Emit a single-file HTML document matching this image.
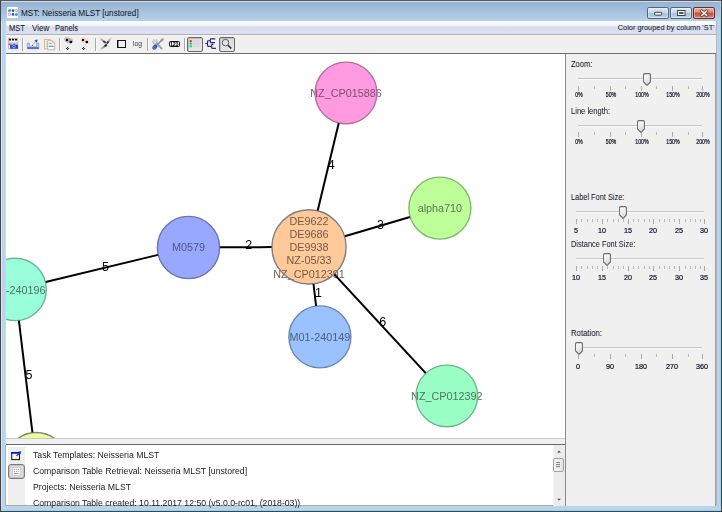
<!DOCTYPE html>
<html><head><meta charset="utf-8">
<style>
*{margin:0;padding:0;box-sizing:border-box}
html,body{width:722px;height:512px;overflow:hidden;background:#c2d7ec;font-family:"Liberation Sans",sans-serif}
.a{position:absolute}
.t{position:absolute;white-space:nowrap;transform-origin:0 0;line-height:1}
#outer{left:0;top:0;width:722px;height:512px;border:1px solid #444;border-top-color:#585858}
#title{left:1px;top:1px;width:720px;height:20px;background:linear-gradient(#cddcec 0,#cddcec 1px,#97b3d3 1px,#b6d0e8 20px)}
#framer{left:716px;top:21px;width:5px;height:490px;background:linear-gradient(90deg,#a8b8cc 0,#a8b8cc 1px,#bcd2ea 1px,#bcd2ea 4px,#8cd8f4 4px)}
#framel{left:1px;top:21px;width:5px;height:490px;background:linear-gradient(90deg,#d8e8f8 0,#d8e8f8 1px,#b9d1e9 1px,#c2d8ee 5px)}
#frameb{left:1px;top:506px;width:720px;height:5px;background:linear-gradient(#a8b8cc 0,#a8b8cc 0px,#bcd2ea 0px,#bcd2ea 4px,#8cd8f4 4px)}
#menubar{left:6px;top:21px;width:710px;height:14px;background:linear-gradient(#fdfdff 0,#f4f5fb 4px,#e9ebf6 5px,#d7dcee 6px,#dce1f2 13px,#b0b0b8 13px)}
#toolbar{left:6px;top:35px;width:710px;height:19px;background:linear-gradient(#fbfbfb 0,#f0f0f0 1px,#f0f0f0 18px,#6e6e6e 18px)}
#canvas{left:6px;top:54px;width:559px;height:384px;background:#fff;overflow:hidden}
#vline{left:565px;top:54px;width:1px;height:452px;background:#8a8a8a}
#rpanel{left:566px;top:54px;width:150px;height:452px;background:#f0f0f0;border-right:1px solid #a0a0a0}
#hsplit{left:6px;top:438px;width:559px;height:7px;background:linear-gradient(#c8c8c8 0,#c8c8c8 1px,#f0f0f0 1px,#f0f0f0 6px,#6a6a6a 6px)}
#log{left:6px;top:445px;width:559px;height:61px;background:#fff;overflow:hidden;border-bottom:1px solid #a4acb8}
.btn{position:absolute;top:7px;width:22px;height:12px;border:1px solid #56657c;border-radius:2px;background:linear-gradient(#dce8f4 0,#c8d8ec 45%,#a8c0dc 50%,#b4cce6 85%,#c8dcf0 100%);box-shadow:inset 0 0 0 1px rgba(255,255,255,0.35)}
</style></head><body>
<div id="outer" class="a"></div>
<div id="title" class="a"></div>
<div id="framel" class="a"></div>
<div id="framer" class="a"></div>
<div id="frameb" class="a"></div>
<div class="a" style="left:720px;top:2px;width:1px;height:19px;background:linear-gradient(#b0d4ee,#98d4f0)"></div>
<div id="menubar" class="a"></div>
<div id="toolbar" class="a"></div>
<div id="canvas" class="a"><svg class="a" style="left:0;top:0;will-change:transform" width="559" height="384" viewBox="6 54 559 384">
<circle cx="346" cy="93" r="30.9" fill="#ff99e0"/>
<circle cx="439.9" cy="208.1" r="31.0" fill="#bfff99"/>
<circle cx="309" cy="246.9" r="37.1" fill="#ffc999"/>
<circle cx="188.5" cy="247.5" r="31.099999999999998" fill="#99a8ff"/>
<circle cx="15.1" cy="289.4" r="31.2" fill="#99ffdb"/>
<circle cx="319.9" cy="336.9" r="31.0" fill="#99c2ff"/>
<circle cx="446.8" cy="395.9" r="30.8" fill="#99ffc4"/>
<circle cx="36.2" cy="463.5" r="31.0" fill="#e8ff99"/>
<g font-family="Liberation Sans" font-size="10.8" text-anchor="middle">
<text x="346" y="97" fill="#74546e">NZ_CP015886</text>
<text x="439.9" y="212.2" fill="#5c7454">alpha710</text>
<text x="309" y="224.6" fill="#725c46">DE9622</text>
<text x="309" y="238.0" fill="#725c46">DE9686</text>
<text x="309" y="250.9" fill="#725c46">DE9938</text>
<text x="309" y="264.0" fill="#725c46">NZ-05/33</text>
<text x="309" y="277.6" fill="#725c46">NZ_CP012391</text>
<text x="188.5" y="251.2" fill="#505684">M0579</text>
<text x="15.1" y="293.7" fill="#4e7464">M01-240196</text>
<text x="319.9" y="341" fill="#4e5e7c">M01-240149</text>
<text x="446.8" y="400" fill="#4e745c">NZ_CP012392</text>
</g>
<circle cx="346" cy="93" r="30.9" fill="none" stroke="#b46ea0" stroke-width="1.4"/>
<circle cx="439.9" cy="208.1" r="31.0" fill="none" stroke="#7fb86c" stroke-width="1.4"/>
<circle cx="309" cy="246.9" r="37.1" fill="none" stroke="#808080" stroke-width="1.4"/>
<circle cx="188.5" cy="247.5" r="31.099999999999998" fill="none" stroke="#6a76b4" stroke-width="1.4"/>
<circle cx="15.1" cy="289.4" r="31.2" fill="none" stroke="#6eb49a" stroke-width="1.4"/>
<circle cx="319.9" cy="336.9" r="31.0" fill="none" stroke="#6a88b4" stroke-width="1.4"/>
<circle cx="446.8" cy="395.9" r="30.8" fill="none" stroke="#6eb48a" stroke-width="1.4"/>
<circle cx="36.2" cy="463.5" r="31.0" fill="none" stroke="#808080" stroke-width="1.4"/>
<line x1="317.7" y1="210.5" x2="338.7" y2="123.3" stroke="#000" stroke-width="2"/>
<line x1="344.9" y1="236.3" x2="409.9" y2="217.0" stroke="#000" stroke-width="2"/>
<line x1="271.6" y1="247.1" x2="219.9" y2="247.3" stroke="#000" stroke-width="2"/>
<line x1="313.5" y1="284.0" x2="316.1" y2="305.8" stroke="#000" stroke-width="2"/>
<line x1="334.4" y1="274.4" x2="425.7" y2="373.1" stroke="#000" stroke-width="2"/>
<line x1="158.0" y1="254.9" x2="45.7" y2="282.0" stroke="#000" stroke-width="2"/>
<line x1="18.9" y1="320.7" x2="32.4" y2="432.4" stroke="#000" stroke-width="2"/>
<g font-family="Liberation Sans" font-size="12.5" fill="#000">
<text x="327.7" y="169">4</text>
<text x="377.09999999999997" y="229">3</text>
<text x="245.20000000000002" y="249.3">2</text>
<text x="314.9" y="296.9">1</text>
<text x="379.2" y="326.3">6</text>
<text x="102.10000000000001" y="270.8">5</text>
<text x="25.5" y="378.8">5</text>
</g></svg></div>
<div id="vline" class="a"></div>
<div id="rpanel" class="a"></div>
<div id="hsplit" class="a"></div>
<div id="log" class="a"></div>
<div class="btn" style="left:647px"></div>
<div class="btn" style="left:670px"></div>
<div class="btn" style="left:693px;border-color:#6a2a2a;background:linear-gradient(#e8b0a0 0,#dc9080 40%,#c85030 50%,#d06848 80%,#e09080 100%)"></div>
<svg class="a" style="left:647px;top:7px" width="68" height="12" viewBox="0 0 68 12">
<rect x="7.5" y="5.3" width="7.2" height="2.8" rx="0.6" fill="#fff" stroke="#3a4250" stroke-width="1"/>
<rect x="30.5" y="3.5" width="7.5" height="5" fill="#fff" stroke="#3a4250" stroke-width="1"/>
<rect x="32" y="5" width="4.5" height="2" fill="#4a5668"/>
<path d="M54.8 4 L59.6 8.4 M59.6 4 L54.8 8.4" stroke="#5a3a3a" stroke-width="3" stroke-linecap="square"/>
<path d="M54.8 4 L59.6 8.4 M59.6 4 L54.8 8.4" stroke="#f4f4f4" stroke-width="1.5" stroke-linecap="square"/>
</svg>
<svg class="a" style="left:7px;top:7px" width="11" height="11" viewBox="0 0 11 11"><rect width="11" height="11" fill="#fff"/><circle cx="2.5" cy="3.6" r="1.5" fill="#1ea4ec"/><circle cx="6" cy="3.6" r="1.3" fill="#1a5ab8"/><circle cx="9.4" cy="3.6" r="1.2" fill="none" stroke="#f27ac0" stroke-width="1"/><circle cx="2.5" cy="7.4" r="1.2" fill="none" stroke="#f27ac0" stroke-width="1"/><circle cx="6" cy="7.4" r="1.3" fill="#1a5ab8"/><circle cx="9.4" cy="7.4" r="1.5" fill="#1ea4ec"/></svg>
<div class="t" style="left:21px;top:9.86px;font-size:8.2px;color:#101020;">MST: Neisseria MLST [unstored]</div>
<div class="t" style="left:8.8px;top:23.69px;font-size:8.4px;color:#0a0a14;transform:scaleX(0.9);">MST</div>
<div class="t" style="left:31.5px;top:23.69px;font-size:8.4px;color:#0a0a14;transform:scaleX(0.96);">View</div>
<div class="t" style="left:54.5px;top:23.69px;font-size:8.4px;color:#0a0a14;transform:scaleX(0.9);">Panels</div>
<div class="t" style="left:617.7px;top:23.64px;font-size:7.4px;color:#0a0a14;">Color grouped by column 'ST'</div>
<svg class="a" style="left:8px;top:38px" width="11" height="12" viewBox="0 0 11 12">
<rect x="0.6" y="0.4" width="9" height="10.3" fill="#f8f8f8" stroke="#b4b4b4" stroke-width="0.9"/>
<rect x="1" y="0.8" width="2.1" height="1.8" rx="0.6" fill="#000"/><rect x="3.9" y="0.8" width="2.1" height="1.8" rx="0.6" fill="#000"/><rect x="6.9" y="0.8" width="2.1" height="1.8" rx="0.6" fill="#000"/>
<rect x="1" y="4.2" width="8.4" height="1.6" fill="#f0b8b8"/>
<circle cx="1.6" cy="6.3" r="0.9" fill="#f01818"/>
<rect x="2.1" y="6.6" width="7.9" height="4.2" rx="0.4" fill="#1a48d8"/><rect x="5.2" y="5.8" width="1.8" height="1" fill="#1a48d8"/>
<circle cx="6" cy="8.6" r="1.3" fill="none" stroke="#a8c0f0" stroke-width="0.8"/>
</svg>
<div class="a" style="left:22px;top:38px;width:1px;height:13px;background:#a8a8a8;box-shadow:1px 0 0 #fff"></div>
<svg class="a" style="left:26px;top:39px" width="14" height="11" viewBox="0 0 14 11">
<path d="M1.3 4 h2 v3.8 h7.4 v-3.8 h2 v5.7 h-11.4 z" fill="#9ab4dc" stroke="#7090c4" stroke-width="0.6"/>
<path d="M2.2 4.6 v3.6 M11.8 4.6 v3.6" stroke="#e4ecf8" stroke-width="0.6"/>
<rect x="1.2" y="8.3" width="11.6" height="1.5" fill="#4a6cb0"/>
<line x1="6.4" y1="6.2" x2="9.4" y2="2.8" stroke="#3a4aa8" stroke-width="0.8" stroke-dasharray="0.8 0.8"/>
<circle cx="6.4" cy="6.3" r="0.55" fill="#2030a0"/>
<path d="M8.8 1.6 L11.2 0.8 L10.6 3.2 Z" fill="#1a4aa8" stroke="#1a4aa8" stroke-width="0.6" stroke-linejoin="round"/>
</svg>
<svg class="a" style="left:44px;top:39px" width="12" height="12" viewBox="0 0 12 12">
<rect x="0.5" y="0.5" width="5.6" height="9.3" fill="#f2f4fa" stroke="#cdb880" stroke-width="0.9"/>
<line x1="1.8" y1="2.8" x2="3.5" y2="2.8" stroke="#9ab0d8" stroke-width="0.8"/><line x1="1.8" y1="5.2" x2="3.5" y2="5.2" stroke="#9ab0d8" stroke-width="0.8"/><line x1="1.8" y1="7.4" x2="3.5" y2="7.4" stroke="#9ab0d8" stroke-width="0.8"/>
<path d="M3.6 1.5 h4.8 l2.4 2.4 v6.8 h-7.2 z" fill="#f6f8fd" stroke="#cdb880" stroke-width="0.9"/>
<path d="M8.4 1.5 v2.4 h2.4" fill="#e8d8a8" stroke="#cdb880" stroke-width="0.6"/>
<line x1="4.8" y1="4.3" x2="7.6" y2="4.3" stroke="#7890c8" stroke-width="0.9"/><line x1="4.8" y1="7.3" x2="9.8" y2="7.3" stroke="#8098cc" stroke-width="1.4"/>
</svg>
<div class="a" style="left:59px;top:38px;width:1px;height:13px;background:#a8a8a8;box-shadow:1px 0 0 #fff"></div>
<svg class="a" style="left:63px;top:37px" width="12" height="14" viewBox="0 0 12 14">
<ellipse cx="5.8" cy="3.3" rx="4.7" ry="2.6" transform="rotate(22 5.8 3.3)" fill="#a8a8a8" opacity="0.8"/>
<circle cx="4" cy="3" r="1.2" fill="#000"/><circle cx="7.8" cy="5" r="1.3" fill="#000"/>
<line x1="6.8" y1="7" x2="5" y2="10" stroke="#c4c4c4" stroke-width="0.6"/>
<path d="M4 10h1v1h-1zM3 11h1v1h-1zM5 11h1v1h-1zM4 12h1v1h-1z" fill="#2a2a2a"/><rect x="4" y="11" width="1" height="1" fill="#b0b0b0"/>
</svg>
<svg class="a" style="left:79px;top:37px" width="12" height="14" viewBox="0 0 12 14">
<ellipse cx="6" cy="3.6" rx="4.6" ry="2.9" transform="rotate(22 6 3.6)" fill="#ffd6d6" opacity="0.9"/>
<circle cx="4" cy="3" r="1.2" fill="#000"/><circle cx="7.8" cy="5" r="1.3" fill="#000"/>
<line x1="6.8" y1="7" x2="5" y2="10" stroke="#c4c4c4" stroke-width="0.6"/>
<path d="M4 10h1v1h-1zM3 11h1v1h-1zM5 11h1v1h-1zM4 12h1v1h-1z" fill="#2a2a2a"/><rect x="4" y="11" width="1" height="1" fill="#b0b0b0"/>
</svg>
<div class="a" style="left:95px;top:38px;width:1px;height:13px;background:#a8a8a8;box-shadow:1px 0 0 #fff"></div>
<svg class="a" style="left:99px;top:37px" width="13" height="14" viewBox="0 0 13 14">
<defs>
<linearGradient id="s1" gradientUnits="userSpaceOnUse" x1="1" y1="1.5" x2="6.5" y2="5.5"><stop offset="0" stop-color="#e0e0e0"/><stop offset="1" stop-color="#505050"/></linearGradient>
<linearGradient id="s2" gradientUnits="userSpaceOnUse" x1="12" y1="1.2" x2="8" y2="6.2"><stop offset="0" stop-color="#e0e0e0"/><stop offset="1" stop-color="#505050"/></linearGradient>
<linearGradient id="s3" gradientUnits="userSpaceOnUse" x1="1.5" y1="12.8" x2="7.5" y2="7.8"><stop offset="0" stop-color="#e8e8e8"/><stop offset="1" stop-color="#404040"/></linearGradient>
</defs>
<path d="M1.2 1.6 L6.2 5.6" stroke="url(#s1)" stroke-width="1.9" stroke-linecap="round"/>
<circle cx="5.3" cy="4.7" r="1" fill="#3a3a3a"/>
<path d="M11.8 1.3 L8.2 6" stroke="url(#s2)" stroke-width="1.9" stroke-linecap="round"/>
<circle cx="8.7" cy="5.6" r="1" fill="#2e2e2e"/>
<path d="M1.6 12.6 L7.3 8" stroke="url(#s3)" stroke-width="1.9" stroke-linecap="round"/>
<circle cx="6.6" cy="8.6" r="1.1" fill="#1e1e1e"/>
</svg>
<div class="a" style="left:117px;top:40px;width:9px;height:8px;border:1.3px solid #111;box-shadow:inset 1px 0 0 #909090"></div>
<div class="t" style="left:133px;top:41.2px;font-size:6.7px;color:#333;letter-spacing:0px;will-change:transform">log</div>
<div class="a" style="left:147px;top:38px;width:1px;height:13px;background:#a8a8a8;box-shadow:1px 0 0 #fff"></div>
<svg class="a" style="left:151px;top:38px" width="13" height="12" viewBox="0 0 13 12">
<line x1="5.6" y1="5" x2="10.6" y2="10.6" stroke="#9c9c9c" stroke-width="1.9" stroke-linecap="round"/>
<path d="M1.6 3.2 Q1.8 5.6 4.2 5.6 Q6.4 5.4 6.3 3.2 M2.6 1.4 L3.4 3.6 M5.6 1.2 L4.8 3.4" stroke="#b4b4b4" stroke-width="1.2" fill="none"/>
<line x1="12" y1="1" x2="6.2" y2="6.8" stroke="#8c8c8c" stroke-width="1.3"/>
<line x1="11.6" y1="1.4" x2="9.8" y2="3.2" stroke="#9a9a9a" stroke-width="2.2" stroke-linecap="round"/>
<ellipse cx="3.9" cy="9" rx="2.9" ry="2.1" transform="rotate(-45 3.9 9)" fill="#3060b8"/>
<path d="M2.5 9.6 l1.2 -1.2 M3.6 10.6 l1.2 -1.2" stroke="#9ab4e0" stroke-width="0.6"/>
</svg>
<div class="a" style="left:168.5px;top:41px;width:11.8px;height:6.2px;background:#fff;border:1.2px solid #111;border-radius:1.4px"></div>
<div class="t" style="left:169.9px;top:41.8px;font-size:5.4px;font-weight:bold;color:#000;letter-spacing:-0.2px;will-change:transform">123</div>
<div class="a" style="left:184px;top:38px;width:1px;height:13px;background:#a8a8a8;box-shadow:1px 0 0 #fff"></div>
<div class="a" style="left:187px;top:37px;width:16px;height:15px;border:1px solid #6a6a6a;border-radius:2px;background:linear-gradient(#dcdcdc,#e6e6e6);box-shadow:inset 1px 1px 0 #c0c0c0"></div>
<svg class="a" style="left:188px;top:38px" width="14" height="13" viewBox="0 0 14 13">
<circle cx="2.7" cy="3.1" r="1.2" fill="#f02828"/><circle cx="2.7" cy="5.6" r="1.2" fill="#18d018"/><circle cx="2.7" cy="8.3" r="1.2" fill="#18d0e0"/>
<path d="M4.5 3.1 h6 M4.5 5.6 h6 M4.5 8.3 h6" stroke="#c8c8c8" stroke-width="0.7" stroke-dasharray="1.2 0.4"/><path d="M10.8 2.5 v6.5" stroke="#d0d0d0" stroke-width="0.5"/>
</svg>
<svg class="a" style="left:203px;top:36px" width="16" height="16" viewBox="0 0 16 16">
<path d="M2.2 7.5 H4.5 M6.8 4.7 H5.3 Q4.5 4.7 4.5 5.5 V9.5 Q4.5 10.3 5.3 10.3 H8 M12.3 2.9 H8 Q7.3 2.9 7.3 3.6 V5.9 Q7.3 6.6 8 6.6 H12 M10.4 8.4 H9.4 Q8.7 8.4 8.7 9.1 V11.6 Q8.7 12.3 9.4 12.3 H12.9" stroke="#26267c" stroke-width="1.15" fill="none"/>
</svg>
<div class="a" style="left:219px;top:37px;width:16px;height:15px;border:1px solid #6a6a6a;border-radius:2px;background:linear-gradient(#dcdcdc,#e6e6e6);box-shadow:inset 1px 1px 0 #c0c0c0"></div>
<svg class="a" style="left:220px;top:38px" width="14" height="13" viewBox="0 0 14 13">
<circle cx="5.5" cy="4.6" r="3.3" fill="none" stroke="#5a5a68" stroke-width="1"/>
<line x1="8" y1="7.2" x2="11.3" y2="10.5" stroke="#282858" stroke-width="1.6"/>
</svg>
<div class="t" style="left:570.7px;top:60.02px;font-size:8.6px;color:#0c0c24;transform:scaleX(0.873);">Zoom:</div>
<div class="a" style="left:578px;top:77.5px;width:124px;height:2px;background:linear-gradient(#c6c6c6 50%,#fafafa 50%)"></div>
<div class="a" style="left:578.0px;top:86px;width:1px;height:4.5px;background:#a8a8a8"></div>
<div class="a" style="left:594.0px;top:86px;width:1px;height:3px;background:#b8b8b8"></div>
<div class="a" style="left:610.0px;top:86px;width:1px;height:4.5px;background:#a8a8a8"></div>
<div class="a" style="left:625.0px;top:86px;width:1px;height:3px;background:#b8b8b8"></div>
<div class="a" style="left:641.0px;top:86px;width:1px;height:4.5px;background:#a8a8a8"></div>
<div class="a" style="left:656.0px;top:86px;width:1px;height:3px;background:#b8b8b8"></div>
<div class="a" style="left:672.0px;top:86px;width:1px;height:4.5px;background:#a8a8a8"></div>
<div class="a" style="left:687.5px;top:86px;width:1px;height:3px;background:#b8b8b8"></div>
<div class="a" style="left:702.0px;top:86px;width:1px;height:4.5px;background:#a8a8a8"></div>
<div class="t" style="left:529.1px;width:100px;text-align:center;top:92.21px;font-size:6.6px;color:#0c0c24;transform:scaleX(0.8);transform-origin:50% 0;-webkit-text-stroke:0.2px #0c0c24;">0%</div>
<div class="t" style="left:561.1px;width:100px;text-align:center;top:92.21px;font-size:6.6px;color:#0c0c24;transform:scaleX(0.8);transform-origin:50% 0;-webkit-text-stroke:0.2px #0c0c24;">50%</div>
<div class="t" style="left:592.1px;width:100px;text-align:center;top:92.21px;font-size:6.6px;color:#0c0c24;transform:scaleX(0.8);transform-origin:50% 0;-webkit-text-stroke:0.2px #0c0c24;">100%</div>
<div class="t" style="left:623.1px;width:100px;text-align:center;top:92.21px;font-size:6.6px;color:#0c0c24;transform:scaleX(0.8);transform-origin:50% 0;-webkit-text-stroke:0.2px #0c0c24;">150%</div>
<div class="t" style="left:653.1px;width:100px;text-align:center;top:92.21px;font-size:6.6px;color:#0c0c24;transform:scaleX(0.8);transform-origin:50% 0;-webkit-text-stroke:0.2px #0c0c24;">200%</div>
<svg class="a" style="left:643.2px;top:72.5px" width="8" height="13" viewBox="0 0 8 13"><defs><linearGradient id="tg" x1="0" y1="0" x2="0" y2="1"><stop offset="0" stop-color="#fafafa"/><stop offset="0.45" stop-color="#ececec"/><stop offset="1" stop-color="#d4d4d4"/></linearGradient></defs><path d="M0.6 1.8 Q0.6 0.6 1.8 0.6 H6.2 Q7.4 0.6 7.4 1.8 V9 L4.3 12.2 H3.7 L0.6 9 Z" fill="url(#tg)" stroke="#6c6c6c" stroke-width="1.1"/><path d="M1.7 2 V8.6" stroke="#fff" stroke-width="0.9" opacity="0.8"/></svg>
<div class="t" style="left:570.7px;top:106.52px;font-size:8.6px;color:#0c0c24;transform:scaleX(0.881);">Line length:</div>
<div class="a" style="left:578px;top:124.5px;width:124px;height:2px;background:linear-gradient(#c6c6c6 50%,#fafafa 50%)"></div>
<div class="a" style="left:578.0px;top:132px;width:1px;height:4.5px;background:#a8a8a8"></div>
<div class="a" style="left:594.0px;top:132px;width:1px;height:3px;background:#b8b8b8"></div>
<div class="a" style="left:610.0px;top:132px;width:1px;height:4.5px;background:#a8a8a8"></div>
<div class="a" style="left:625.0px;top:132px;width:1px;height:3px;background:#b8b8b8"></div>
<div class="a" style="left:641.0px;top:132px;width:1px;height:4.5px;background:#a8a8a8"></div>
<div class="a" style="left:656.0px;top:132px;width:1px;height:3px;background:#b8b8b8"></div>
<div class="a" style="left:672.0px;top:132px;width:1px;height:4.5px;background:#a8a8a8"></div>
<div class="a" style="left:687.5px;top:132px;width:1px;height:3px;background:#b8b8b8"></div>
<div class="a" style="left:702.0px;top:132px;width:1px;height:4.5px;background:#a8a8a8"></div>
<div class="t" style="left:529.1px;width:100px;text-align:center;top:139.11px;font-size:6.6px;color:#0c0c24;transform:scaleX(0.8);transform-origin:50% 0;-webkit-text-stroke:0.2px #0c0c24;">0%</div>
<div class="t" style="left:561.1px;width:100px;text-align:center;top:139.11px;font-size:6.6px;color:#0c0c24;transform:scaleX(0.8);transform-origin:50% 0;-webkit-text-stroke:0.2px #0c0c24;">50%</div>
<div class="t" style="left:592.1px;width:100px;text-align:center;top:139.11px;font-size:6.6px;color:#0c0c24;transform:scaleX(0.8);transform-origin:50% 0;-webkit-text-stroke:0.2px #0c0c24;">100%</div>
<div class="t" style="left:623.1px;width:100px;text-align:center;top:139.11px;font-size:6.6px;color:#0c0c24;transform:scaleX(0.8);transform-origin:50% 0;-webkit-text-stroke:0.2px #0c0c24;">150%</div>
<div class="t" style="left:653.1px;width:100px;text-align:center;top:139.11px;font-size:6.6px;color:#0c0c24;transform:scaleX(0.8);transform-origin:50% 0;-webkit-text-stroke:0.2px #0c0c24;">200%</div>
<svg class="a" style="left:637px;top:119.5px" width="8" height="13" viewBox="0 0 8 13"><defs><linearGradient id="tg" x1="0" y1="0" x2="0" y2="1"><stop offset="0" stop-color="#fafafa"/><stop offset="0.45" stop-color="#ececec"/><stop offset="1" stop-color="#d4d4d4"/></linearGradient></defs><path d="M0.6 1.8 Q0.6 0.6 1.8 0.6 H6.2 Q7.4 0.6 7.4 1.8 V9 L4.3 12.2 H3.7 L0.6 9 Z" fill="url(#tg)" stroke="#6c6c6c" stroke-width="1.1"/><path d="M1.7 2 V8.6" stroke="#fff" stroke-width="0.9" opacity="0.8"/></svg>
<div class="t" style="left:570.7px;top:192.52px;font-size:8.6px;color:#0c0c24;transform:scaleX(0.858);">Label Font Size:</div>
<div class="a" style="left:576px;top:211px;width:128px;height:2px;background:linear-gradient(#c6c6c6 50%,#fafafa 50%)"></div>
<div class="a" style="left:576.0px;top:219px;width:1px;height:4.5px;background:#a8a8a8"></div>
<div class="a" style="left:581.0px;top:219px;width:1px;height:3px;background:#b8b8b8"></div>
<div class="a" style="left:587.0px;top:219px;width:1px;height:3px;background:#b8b8b8"></div>
<div class="a" style="left:592.0px;top:219px;width:1px;height:3px;background:#b8b8b8"></div>
<div class="a" style="left:597.0px;top:219px;width:1px;height:3px;background:#b8b8b8"></div>
<div class="a" style="left:602.0px;top:219px;width:1px;height:4.5px;background:#a8a8a8"></div>
<div class="a" style="left:607.0px;top:219px;width:1px;height:3px;background:#b8b8b8"></div>
<div class="a" style="left:613.0px;top:219px;width:1px;height:3px;background:#b8b8b8"></div>
<div class="a" style="left:618.0px;top:219px;width:1px;height:3px;background:#b8b8b8"></div>
<div class="a" style="left:623.0px;top:219px;width:1px;height:3px;background:#b8b8b8"></div>
<div class="a" style="left:628.0px;top:219px;width:1px;height:4.5px;background:#a8a8a8"></div>
<div class="a" style="left:633.0px;top:219px;width:1px;height:3px;background:#b8b8b8"></div>
<div class="a" style="left:638.0px;top:219px;width:1px;height:3px;background:#b8b8b8"></div>
<div class="a" style="left:643.5px;top:219px;width:1px;height:3px;background:#b8b8b8"></div>
<div class="a" style="left:648.5px;top:219px;width:1px;height:3px;background:#b8b8b8"></div>
<div class="a" style="left:653.0px;top:219px;width:1px;height:4.5px;background:#a8a8a8"></div>
<div class="a" style="left:659.0px;top:219px;width:1px;height:3px;background:#b8b8b8"></div>
<div class="a" style="left:664.0px;top:219px;width:1px;height:3px;background:#b8b8b8"></div>
<div class="a" style="left:669.0px;top:219px;width:1px;height:3px;background:#b8b8b8"></div>
<div class="a" style="left:674.0px;top:219px;width:1px;height:3px;background:#b8b8b8"></div>
<div class="a" style="left:679.0px;top:219px;width:1px;height:4.5px;background:#a8a8a8"></div>
<div class="a" style="left:685.0px;top:219px;width:1px;height:3px;background:#b8b8b8"></div>
<div class="a" style="left:690.0px;top:219px;width:1px;height:3px;background:#b8b8b8"></div>
<div class="a" style="left:695.0px;top:219px;width:1px;height:3px;background:#b8b8b8"></div>
<div class="a" style="left:700.0px;top:219px;width:1px;height:3px;background:#b8b8b8"></div>
<div class="a" style="left:704.0px;top:219px;width:1px;height:4.5px;background:#a8a8a8"></div>
<div class="t" style="left:526.1px;width:100px;text-align:center;top:226.93px;font-size:8px;color:#0c0c24;transform:scaleX(0.9);transform-origin:50% 0;-webkit-text-stroke:0.2px #0c0c24;">5</div>
<div class="t" style="left:552.1px;width:100px;text-align:center;top:226.93px;font-size:8px;color:#0c0c24;transform:scaleX(0.9);transform-origin:50% 0;-webkit-text-stroke:0.2px #0c0c24;">10</div>
<div class="t" style="left:578.1px;width:100px;text-align:center;top:226.93px;font-size:8px;color:#0c0c24;transform:scaleX(0.9);transform-origin:50% 0;-webkit-text-stroke:0.2px #0c0c24;">15</div>
<div class="t" style="left:603.1px;width:100px;text-align:center;top:226.93px;font-size:8px;color:#0c0c24;transform:scaleX(0.9);transform-origin:50% 0;-webkit-text-stroke:0.2px #0c0c24;">20</div>
<div class="t" style="left:629.1px;width:100px;text-align:center;top:226.93px;font-size:8px;color:#0c0c24;transform:scaleX(0.9);transform-origin:50% 0;-webkit-text-stroke:0.2px #0c0c24;">25</div>
<div class="t" style="left:654.1px;width:100px;text-align:center;top:226.93px;font-size:8px;color:#0c0c24;transform:scaleX(0.9);transform-origin:50% 0;-webkit-text-stroke:0.2px #0c0c24;">30</div>
<svg class="a" style="left:618.6px;top:206px" width="8" height="13" viewBox="0 0 8 13"><defs><linearGradient id="tg" x1="0" y1="0" x2="0" y2="1"><stop offset="0" stop-color="#fafafa"/><stop offset="0.45" stop-color="#ececec"/><stop offset="1" stop-color="#d4d4d4"/></linearGradient></defs><path d="M0.6 1.8 Q0.6 0.6 1.8 0.6 H6.2 Q7.4 0.6 7.4 1.8 V9 L4.3 12.2 H3.7 L0.6 9 Z" fill="url(#tg)" stroke="#6c6c6c" stroke-width="1.1"/><path d="M1.7 2 V8.6" stroke="#fff" stroke-width="0.9" opacity="0.8"/></svg>
<div class="t" style="left:570.7px;top:239.52px;font-size:8.6px;color:#0c0c24;transform:scaleX(0.864);">Distance Font Size:</div>
<div class="a" style="left:576px;top:257.7px;width:128px;height:2px;background:linear-gradient(#c6c6c6 50%,#fafafa 50%)"></div>
<div class="a" style="left:576.0px;top:266px;width:1px;height:4.5px;background:#a8a8a8"></div>
<div class="a" style="left:581.0px;top:266px;width:1px;height:3px;background:#b8b8b8"></div>
<div class="a" style="left:587.0px;top:266px;width:1px;height:3px;background:#b8b8b8"></div>
<div class="a" style="left:592.0px;top:266px;width:1px;height:3px;background:#b8b8b8"></div>
<div class="a" style="left:597.0px;top:266px;width:1px;height:3px;background:#b8b8b8"></div>
<div class="a" style="left:602.0px;top:266px;width:1px;height:4.5px;background:#a8a8a8"></div>
<div class="a" style="left:607.0px;top:266px;width:1px;height:3px;background:#b8b8b8"></div>
<div class="a" style="left:613.0px;top:266px;width:1px;height:3px;background:#b8b8b8"></div>
<div class="a" style="left:618.0px;top:266px;width:1px;height:3px;background:#b8b8b8"></div>
<div class="a" style="left:623.0px;top:266px;width:1px;height:3px;background:#b8b8b8"></div>
<div class="a" style="left:628.0px;top:266px;width:1px;height:4.5px;background:#a8a8a8"></div>
<div class="a" style="left:633.0px;top:266px;width:1px;height:3px;background:#b8b8b8"></div>
<div class="a" style="left:638.0px;top:266px;width:1px;height:3px;background:#b8b8b8"></div>
<div class="a" style="left:643.5px;top:266px;width:1px;height:3px;background:#b8b8b8"></div>
<div class="a" style="left:648.5px;top:266px;width:1px;height:3px;background:#b8b8b8"></div>
<div class="a" style="left:653.0px;top:266px;width:1px;height:4.5px;background:#a8a8a8"></div>
<div class="a" style="left:659.0px;top:266px;width:1px;height:3px;background:#b8b8b8"></div>
<div class="a" style="left:664.0px;top:266px;width:1px;height:3px;background:#b8b8b8"></div>
<div class="a" style="left:669.0px;top:266px;width:1px;height:3px;background:#b8b8b8"></div>
<div class="a" style="left:674.0px;top:266px;width:1px;height:3px;background:#b8b8b8"></div>
<div class="a" style="left:679.0px;top:266px;width:1px;height:4.5px;background:#a8a8a8"></div>
<div class="a" style="left:685.0px;top:266px;width:1px;height:3px;background:#b8b8b8"></div>
<div class="a" style="left:690.0px;top:266px;width:1px;height:3px;background:#b8b8b8"></div>
<div class="a" style="left:695.0px;top:266px;width:1px;height:3px;background:#b8b8b8"></div>
<div class="a" style="left:700.0px;top:266px;width:1px;height:3px;background:#b8b8b8"></div>
<div class="a" style="left:704.0px;top:266px;width:1px;height:4.5px;background:#a8a8a8"></div>
<div class="t" style="left:526.1px;width:100px;text-align:center;top:273.93px;font-size:8px;color:#0c0c24;transform:scaleX(0.9);transform-origin:50% 0;-webkit-text-stroke:0.2px #0c0c24;">10</div>
<div class="t" style="left:552.1px;width:100px;text-align:center;top:273.93px;font-size:8px;color:#0c0c24;transform:scaleX(0.9);transform-origin:50% 0;-webkit-text-stroke:0.2px #0c0c24;">15</div>
<div class="t" style="left:578.1px;width:100px;text-align:center;top:273.93px;font-size:8px;color:#0c0c24;transform:scaleX(0.9);transform-origin:50% 0;-webkit-text-stroke:0.2px #0c0c24;">20</div>
<div class="t" style="left:603.1px;width:100px;text-align:center;top:273.93px;font-size:8px;color:#0c0c24;transform:scaleX(0.9);transform-origin:50% 0;-webkit-text-stroke:0.2px #0c0c24;">25</div>
<div class="t" style="left:629.1px;width:100px;text-align:center;top:273.93px;font-size:8px;color:#0c0c24;transform:scaleX(0.9);transform-origin:50% 0;-webkit-text-stroke:0.2px #0c0c24;">30</div>
<div class="t" style="left:654.1px;width:100px;text-align:center;top:273.93px;font-size:8px;color:#0c0c24;transform:scaleX(0.9);transform-origin:50% 0;-webkit-text-stroke:0.2px #0c0c24;">35</div>
<svg class="a" style="left:603.4px;top:252.7px" width="8" height="13" viewBox="0 0 8 13"><defs><linearGradient id="tg" x1="0" y1="0" x2="0" y2="1"><stop offset="0" stop-color="#fafafa"/><stop offset="0.45" stop-color="#ececec"/><stop offset="1" stop-color="#d4d4d4"/></linearGradient></defs><path d="M0.6 1.8 Q0.6 0.6 1.8 0.6 H6.2 Q7.4 0.6 7.4 1.8 V9 L4.3 12.2 H3.7 L0.6 9 Z" fill="url(#tg)" stroke="#6c6c6c" stroke-width="1.1"/><path d="M1.7 2 V8.6" stroke="#fff" stroke-width="0.9" opacity="0.8"/></svg>
<div class="t" style="left:570.7px;top:328.82px;font-size:8.6px;color:#0c0c24;transform:scaleX(0.9);">Rotation:</div>
<div class="a" style="left:578px;top:346.5px;width:124px;height:2px;background:linear-gradient(#c6c6c6 50%,#fafafa 50%)"></div>
<div class="a" style="left:578.0px;top:354px;width:1px;height:4.5px;background:#a8a8a8"></div>
<div class="a" style="left:594.0px;top:354px;width:1px;height:3px;background:#b8b8b8"></div>
<div class="a" style="left:610.0px;top:354px;width:1px;height:4.5px;background:#a8a8a8"></div>
<div class="a" style="left:625.0px;top:354px;width:1px;height:3px;background:#b8b8b8"></div>
<div class="a" style="left:641.0px;top:354px;width:1px;height:4.5px;background:#a8a8a8"></div>
<div class="a" style="left:656.0px;top:354px;width:1px;height:3px;background:#b8b8b8"></div>
<div class="a" style="left:672.0px;top:354px;width:1px;height:4.5px;background:#a8a8a8"></div>
<div class="a" style="left:687.5px;top:354px;width:1px;height:3px;background:#b8b8b8"></div>
<div class="a" style="left:702.0px;top:354px;width:1px;height:4.5px;background:#a8a8a8"></div>
<div class="t" style="left:528.1px;width:100px;text-align:center;top:362.73px;font-size:8px;color:#0c0c24;transform:scaleX(0.9);transform-origin:50% 0;-webkit-text-stroke:0.2px #0c0c24;">0</div>
<div class="t" style="left:560.1px;width:100px;text-align:center;top:362.73px;font-size:8px;color:#0c0c24;transform:scaleX(0.9);transform-origin:50% 0;-webkit-text-stroke:0.2px #0c0c24;">90</div>
<div class="t" style="left:591.1px;width:100px;text-align:center;top:362.73px;font-size:8px;color:#0c0c24;transform:scaleX(0.9);transform-origin:50% 0;-webkit-text-stroke:0.2px #0c0c24;">180</div>
<div class="t" style="left:622.1px;width:100px;text-align:center;top:362.73px;font-size:8px;color:#0c0c24;transform:scaleX(0.9);transform-origin:50% 0;-webkit-text-stroke:0.2px #0c0c24;">270</div>
<div class="t" style="left:652.1px;width:100px;text-align:center;top:362.73px;font-size:8px;color:#0c0c24;transform:scaleX(0.9);transform-origin:50% 0;-webkit-text-stroke:0.2px #0c0c24;">360</div>
<svg class="a" style="left:574.6px;top:341.5px" width="8" height="13" viewBox="0 0 8 13"><defs><linearGradient id="tg" x1="0" y1="0" x2="0" y2="1"><stop offset="0" stop-color="#fafafa"/><stop offset="0.45" stop-color="#ececec"/><stop offset="1" stop-color="#d4d4d4"/></linearGradient></defs><path d="M0.6 1.8 Q0.6 0.6 1.8 0.6 H6.2 Q7.4 0.6 7.4 1.8 V9 L4.3 12.2 H3.7 L0.6 9 Z" fill="url(#tg)" stroke="#6c6c6c" stroke-width="1.1"/><path d="M1.7 2 V8.6" stroke="#fff" stroke-width="0.9" opacity="0.8"/></svg>
<div class="a" style="left:5px;top:445px;width:1px;height:61px;background:#a4b4c8"></div>
<div class="a" style="left:8px;top:447px;width:17px;height:58px;background:#efefef"></div>
<svg class="a" style="left:11px;top:451px" width="11" height="10" viewBox="0 0 11 10">
<rect x="0.7" y="1.8" width="7.8" height="6.8" fill="#f8f4e0" stroke="#111" stroke-width="1"/>
<line x1="0.2" y1="1.8" x2="8" y2="1.8" stroke="#0010e0" stroke-width="1.6"/>
<line x1="5.5" y1="5" x2="9" y2="1.5" stroke="#1a4aa0" stroke-width="1.2"/>
<path d="M7.2 0.4 L10.2 0.2 L9.8 3.2 Z" fill="#1a4aa0"/>
</svg>
<div class="a" style="left:8px;top:464px;width:17px;height:15px;border:1px solid #7a7a7a;border-radius:3px;background:#dcdcdc;box-shadow:inset 0 0 0 1px #c4c4c4"></div>
<svg class="a" style="left:12px;top:467px" width="9" height="9" viewBox="0 0 9 9">
<rect x="0.5" y="0.5" width="8" height="8" fill="#fafafa" stroke="#cfcfcf" stroke-width="1"/>
<path d="M2 2.3h1 M4 2.3h1 M6 2.3h1 M2 4.3h1 M4 4.3h1 M6 4.3h1 M2 6.5h4 M6.5 6.5h0.8" stroke="#8a8a8a" stroke-width="0.9"/>
</svg>
<div class="t" style="left:32.6px;top:450.84px;font-size:8.7px;color:#1a1a1a;will-change:transform;">Task Templates: Neisseria MLST</div>
<div class="t" style="left:32.6px;top:466.84px;font-size:8.7px;color:#1a1a1a;will-change:transform;">Comparison Table Retrieval: Neisseria MLST [unstored]</div>
<div class="t" style="left:32.6px;top:482.84px;font-size:8.7px;color:#1a1a1a;will-change:transform;">Projects: Neisseria MLST</div>
<div class="t" style="left:32.6px;top:498.84px;font-size:8.7px;color:#1a1a1a;will-change:transform;">Comparison Table created: 10.11.2017 12:50 (v5.0.0-rc01, (2018-03))</div>
<div class="a" style="left:553px;top:445px;width:12px;height:61px;background:#ececec;border-left:1px solid #f4f4f4"></div>
<svg class="a" style="left:555px;top:449px" width="8" height="5" viewBox="0 0 8 5"><path d="M2.2 3.4 L4 1.6 L5.8 3.4 Z" fill="#404040"/></svg>
<svg class="a" style="left:555px;top:497px" width="8" height="5" viewBox="0 0 8 5"><path d="M2.2 1.8 L4 3.6 L5.8 1.8 Z" fill="#404040"/></svg>
<div class="a" style="left:553px;top:458px;width:11px;height:14px;border:1px solid #a2a2a2;border-radius:2px;background:linear-gradient(90deg,#f8f8f8,#e4e4e4)"></div>
<div class="a" style="left:556px;top:462px;width:4px;height:6px;background:repeating-linear-gradient(#8a8a8a 0,#8a8a8a 1px,#e4e4e4 1px,#e4e4e4 2px)"></div>
</body></html>
